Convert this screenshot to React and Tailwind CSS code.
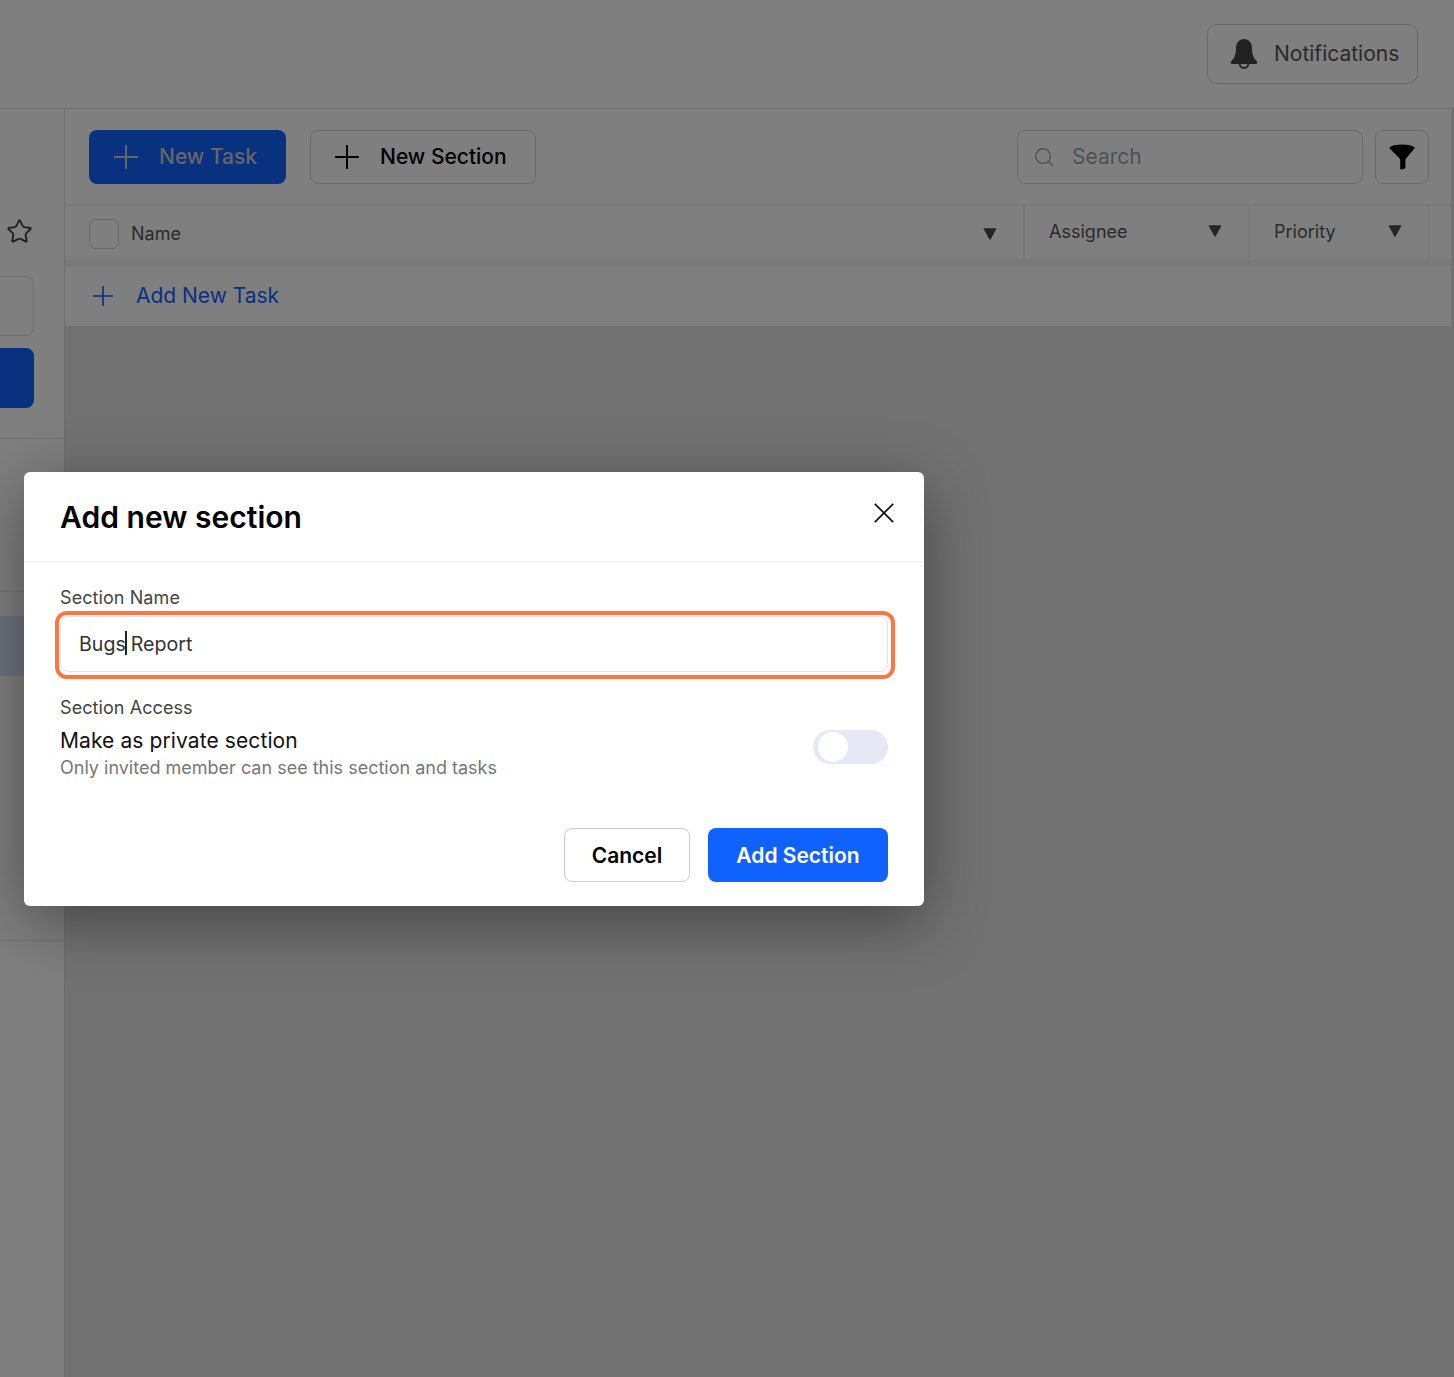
import React from 'react';
import { Star, Search } from 'lucide-react';

const PlusIcon = ({ className }) => (
  <svg viewBox="0 0 24 24" fill="none" stroke="currentColor" strokeWidth="2" className={className}>
    <path d="M12 0v24M0 12h24" />
  </svg>
);

const BellIcon = ({ className }) => (
  <svg viewBox="0 0 28 30" className={className}>
    <path
      fill="currentColor"
      d="M14 0c-5 0-8 4-8 9 0 3-.3 6-1.500 9-.6 1.600-2.500 3-3.500 4.500-.6 1-.3 2.500 1.500 2.500h23c1.800 0 2.100-1.500 1.500-2.500-1-1.500-2.900-2.900-3.500-4.500-1.200-3-1.500-6-1.500-9 0-5-3-9-8-9z"
    />
    <path fill="none" stroke="currentColor" strokeWidth="2" d="M9.500 24c0 3 2 5 4.500 5s4.500-2 4.500-5" />
  </svg>
);

const FunnelIcon = ({ className }) => (
  <svg viewBox="0 0 26 26" className={className}>
    <path
      fill="currentColor"
      d="M1 3C4 1.400 8 .6 13 .6s9 .8 12 2.400c.7.400.8 1 .4 1.500L17 14.500c-.4.500-.6 1-.6 1.600v7.400c0 .7-.4 1.100-1 1.200l-3 .8c-.8.100-1.200-.4-1.200-1.100v-8.300c0-.6-.2-1.100-.6-1.600L.6 4.500C.2 4 .3 3.400 1 3z"
    />
  </svg>
);

const CaretIcon = () => (
  <svg viewBox="0 0 14 12" className="h-3 w-3.5 text-[#4a4a4a]">
    <path fill="currentColor" stroke="currentColor" strokeWidth="1.500" strokeLinejoin="round" d="M1.500 1h11L7 11z" />
  </svg>
);

const CloseIcon = () => (
  <svg viewBox="0 0 20 20" fill="none" stroke="#111111" strokeWidth="1.700" className="h-5 w-5">
    <path d="M.8.800l18.400 18.400M19.200.800L.8 19.200" />
  </svg>
);

const HeaderCell = ({ label, className }) => (
  <div className={`flex items-center justify-between border-r-2 border-[#f4f4f4] ${className}`}>
    <span className="text-[18px] tracking-[0.02px] text-[#555555]">{label}</span>
    <CaretIcon />
  </div>
);

const Sidebar = () => (
  <aside className="flex w-[65px] shrink-0 flex-col border-r border-[#dcdcdc] bg-white">
    <div className="mt-[93px] flex h-[59px] items-center pl-[6px]">
      <Star className="h-[27px] w-[27px] text-[#444444]" strokeWidth={1.700} />
    </div>
    <div className="mr-[30px] mt-[15px] h-[60px] rounded-r-lg border border-l-0 border-[#dddddd]" />
    <div className="mr-[30px] mt-3 h-[60px] rounded-r-lg bg-[#1062ff]" />
    <div className="mt-[30px] h-[153px] border-t border-[#e4e4e4]" />
    <div className="h-[350px] border-y border-[#e4e4e4] pt-6">
      <div className="h-[60px] bg-[#dbe7ff]" />
    </div>
  </aside>
);

const Board = () => (
  <main className="mr-[3px] flex-1">
    <div className="flex h-[97px] items-center justify-between border-b-2 border-[#f0f0f0] bg-white pl-6 pr-[22px]">
      <div className="flex items-center gap-6">
        <button className="flex h-[54px] w-[197px] items-center rounded-lg bg-[#1062ff] pl-[25px] text-[21px] font-medium text-[#cccccc]">
          <PlusIcon className="h-6 w-6 text-[#cccccc]" />
          <span className="ml-[21px]">New Task</span>
        </button>
        <button className="flex h-[54px] w-[226px] items-center rounded-lg border border-[#d6d6d6] pl-6 text-[21px] font-medium text-black">
          <PlusIcon className="h-6 w-6" />
          <span className="ml-[21px]">New Section</span>
        </button>
      </div>
      <div className="flex items-center gap-3">
        <div className="flex h-[54px] w-[346px] items-center rounded-lg border border-[#d6d6d6] pl-[15px]">
          <Search className="h-[22px] w-[22px] text-[#a0a0a0]" strokeWidth={1.500} />
          <span className="ml-[17px] text-[21px] text-[#9ba3ae]">Search</span>
        </div>
        <button className="flex h-[54px] w-[54px] items-center justify-center rounded-lg border border-[#d6d6d6]">
          <FunnelIcon className="h-[26px] w-[26px] text-black" />
        </button>
      </div>
    </div>
    <div className="flex h-[53px] bg-white pl-6">
      <div className="flex w-[936px] items-center justify-between border-r-2 border-[#f4f4f4] pr-[26px] pt-[3px]">
        <div className="flex items-center">
          <div className="h-[30px] w-[30px] rounded-md border border-[#d6d6d6]" />
          <span className="ml-3 -translate-y-px text-[18px] text-[#555555]">Name</span>
        </div>
        <CaretIcon />
      </div>
      <HeaderCell label="Assignee" className="w-[225px] pb-[3px] pl-6 pr-[26px]" />
      <HeaderCell label="Priority" className="w-[180px] pb-[3px] pl-6 pr-[26px]" />
      <div className="flex-1" />
    </div>
    <div className="h-[7px] bg-[#f2f2f2]" />
    <div className="flex h-[60px] items-center bg-white pl-[28px]">
      <PlusIcon className="h-5 w-5 text-[#1062ff]" />
      <span className="ml-[23px] text-[21px] tracking-[-0.02px] text-[#1062ff]">Add New Task</span>
    </div>
  </main>
);

const AddSectionModal = () => (
  <div className="absolute left-6 top-[472px] w-[900px] rounded-md bg-white shadow-[0_16px_64px_rgba(0,0,0,0.4)]">
    <div className="flex h-[90px] items-start justify-between border-b border-[#eeeeee] pl-9 pr-[30px]">
      <h2 className="pt-[25px] text-[30px] leading-[40px] font-semibold tracking-[0.03px] text-black">Add new section</h2>
      <div className="pt-[31px]">
        <CloseIcon />
      </div>
    </div>
    <div className="px-9 pt-[24px]">
      <label className="block text-[18px] leading-6 tracking-[0.08px] text-[#444444]">Section Name</label>
      <div className="relative mt-[6px]">
        <div className="flex h-[56px] items-center rounded-lg border border-[#e2e2e2] pl-[18px] pt-[2px] text-[19.6px] text-[#333333]">
          <span className="relative">
            Bugs
            <span className="absolute right-[-1px] top-[1px] h-[24px] w-[2px] bg-[#222222]" />
          </span>
          <span className="ml-[5px]">Report</span>
        </div>
        <div className="absolute -bottom-[7px] -left-[5px] -right-[7px] -top-[5px] rounded-xl border-4 border-[#ff7443]" />
      </div>
      <div className="mt-[24px] text-[18px] leading-6 tracking-[0.08px] text-[#444444]">Section Access</div>
      <div className="mt-[7px] flex items-start justify-between">
        <div>
          <div className="text-[21px] leading-[28px] tracking-[0.1px] text-[#111111]">Make as private section</div>
          <div className="text-[18px] leading-[26px] text-[#777777]">Only invited member can see this section and tasks</div>
        </div>
        <div className="mt-[3px] flex h-[34px] w-[75px] items-center rounded-full bg-[#e6e8f5] pl-[5px]">
          <div className="h-[30px] w-[30px] rounded-full bg-white" />
        </div>
      </div>
      <div className="flex justify-end gap-[18px] pb-6 pt-[47px]">
        <button className="h-[54px] w-[126px] rounded-lg border border-[#cccccc] pt-[2px] text-[21px] font-semibold text-black">Cancel</button>
        <button className="h-[54px] w-[180px] rounded-lg bg-[#1062ff] pt-[2px] text-[21px] font-semibold text-white">Add Section</button>
      </div>
    </div>
  </div>
);

export default function App() {
  return (
    <div className="relative h-screen overflow-hidden bg-[#e4e4e4] font-['Inter',sans-serif]">
      <header className="flex h-[109px] items-start justify-end border-b border-[#dcdcdc] bg-white pr-9 pt-6">
        <button className="flex h-[60px] w-[211px] items-center rounded-[10px] border border-[#d0d0d0] pl-[22px] text-[21px] text-[#555555]">
          <BellIcon className="h-[30px] w-[28px] text-[#444444]" />
          <span className="ml-[16px]">Notifications</span>
        </button>
      </header>
      <div className="flex h-[1268px]">
        <Sidebar />
        <Board />
      </div>
      <div className="absolute inset-0 bg-black/50" />
      <AddSectionModal />
    </div>
  );
}
